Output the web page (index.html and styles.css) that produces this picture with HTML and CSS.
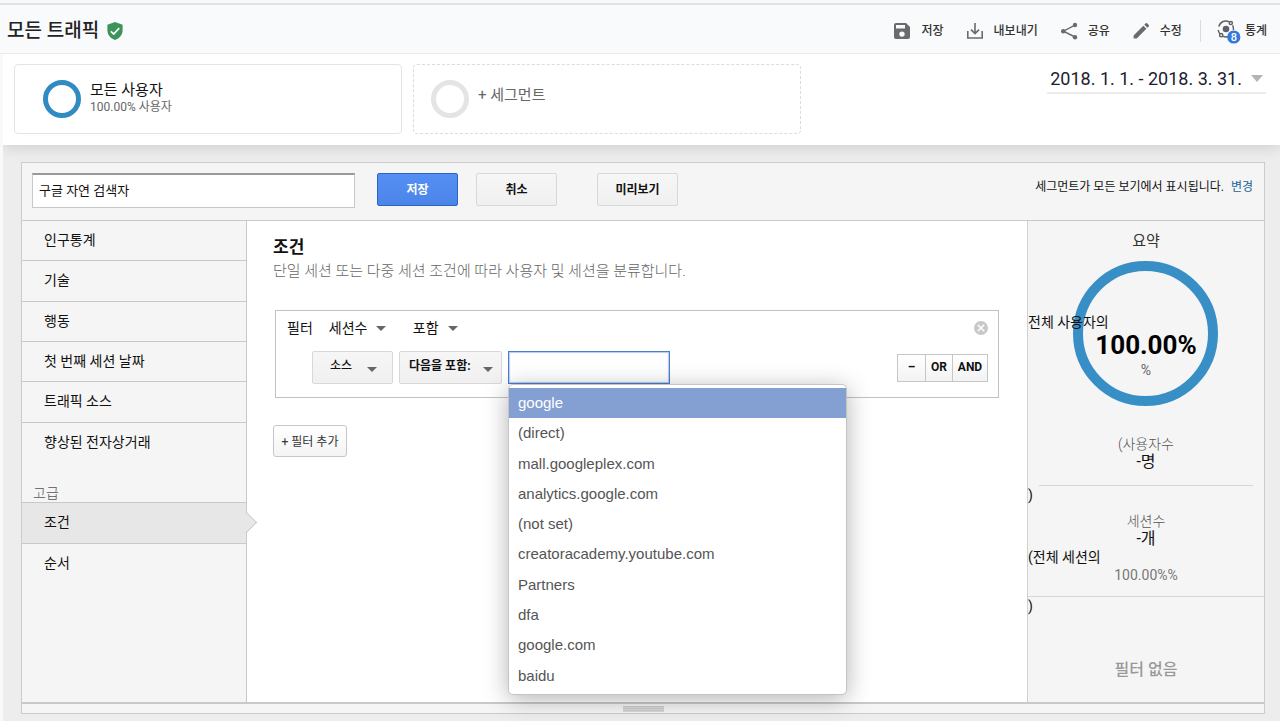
FILE: index.html
```
<!DOCTYPE html>
<html lang="ko">
<head>
    <meta charset="UTF-8">
    <meta name="viewport" content="width=device-width, initial-scale=1.0">
    <title>모든 트래픽</title>
    <link rel="stylesheet" href="styles.css">
</head>
<body>
    <header class="topbar">
        <h1>모든 트래픽</h1>
        <svg class="shield" viewBox="0 0 16 18" width="16" height="18">
            <path d="M8 0 L15.6 2.8 V8.6 C15.6 13 12.4 16.6 8 18 C3.6 16.6 0.4 13 0.4 8.6 V2.8 Z" fill="#3d9358"/>
            <path d="M3.8 9.4 L6.7 12 L12.2 6.2" fill="none" stroke="#fff" stroke-width="1.7"/>
        </svg>
        <div class="toolbar">
            <button type="button" class="tool">
                <svg viewBox="0 0 18 18" width="18" height="18" fill="#6b6b6b">
                    <path fill-rule="evenodd" d="M3 1 H13 L17 5 V15 A2 2 0 0 1 15 17 H3 A2 2 0 0 1 1 15 V3 A2 2 0 0 1 3 1 Z M3 3 V6.6 H12 V3 Z M9 9.4 A2.7 2.7 0 1 0 9 14.8 A2.7 2.7 0 1 0 9 9.4 Z"/>
                </svg>
                저장
            </button>
            <button type="button" class="tool">
                <svg viewBox="0 0 18 18" width="18" height="18" fill="none" stroke="#6b6b6b" stroke-width="1.6">
                    <path d="M1.8 9 V16 H16.2 V9 M9 1 V11.4 M5 7.6 L9 11.6 L13 7.6"/>
                </svg>
                내보내기
            </button>
            <button type="button" class="tool">
                <svg viewBox="0 0 18 18" width="18" height="18" fill="#6b6b6b">
                    <path d="M15 3.2 L3.4 9.2 L15 15" fill="none" stroke="#6b6b6b" stroke-width="1.4"/>
                    <circle cx="15" cy="3" r="2.2"/>
                    <circle cx="3.2" cy="9.2" r="2.2"/>
                    <circle cx="15" cy="15.2" r="2.2"/>
                </svg>
                공유
            </button>
            <button type="button" class="tool">
                <svg viewBox="0 0 18 18" width="18" height="18" fill="#6b6b6b">
                    <path d="M1.6 13.4 L11.3 3.7 L14.4 6.8 L4.7 16.5 H1.6 Z M12.3 2.7 L13.7 1.3 Q14.4 0.8 15.1 1.3 L16.8 3 Q17.3 3.7 16.8 4.4 L15.4 5.8 Z"/>
                </svg>
                수정
            </button>
            <button type="button" class="tool tool-insights">
                <svg viewBox="0 0 28 26" width="28" height="26" fill="none" stroke="#5f6164" stroke-width="1.5">
                    <circle cx="9" cy="11" r="3.3" fill="#5f6164" stroke="none"/>
                    <path d="M1.8 8.6 C3.4 3.2 8 2 12 3.6 M15.6 7.4 Q16.8 9.6 16.4 12 M1.2 12 Q1.6 14.4 3 16 M6 18.4 Q9 19.4 12 18.4"/>
                    <circle cx="13.8" cy="5" r="1.6"/>
                    <circle cx="4.2" cy="17.2" r="1.6"/>
                    <circle cx="16.8" cy="19" r="6.6" fill="#3577de" stroke="none"/>
                    <text x="16.8" y="23" class="badge-text">8</text>
                </svg>
                통계
            </button>
        </div>
    </header>

    <section class="segments">
        <button type="button" class="segment">
            <span class="donut"></span>
            <span class="segment-text">
                <span class="segment-name">모든 사용자</span>
                <span class="segment-share">100.00% 사용자</span>
            </span>
        </button>
        <button type="button" class="segment segment-add">
            <span class="donut donut-empty"></span>
            <span class="segment-text">+ 세그먼트</span>
        </button>
        <button type="button" class="date-range">2018. 1. 1. - 2018. 3. 31.</button>
    </section>

    <main class="workspace">
        <form class="builder">
            <div class="builder-head">
                <input type="text" class="segment-input" value="구글 자연 검색자" aria-label="세그먼트 이름">
                <button type="button" class="btn btn-primary">저장</button>
                <button type="button" class="btn">취소</button>
                <button type="button" class="btn btn-preview">미리보기</button>
                <p class="visibility">세그먼트가 모든 보기에서 표시됩니다. <a href="#">변경</a></p>
            </div>

            <div class="builder-body">
                <nav class="sidebar">
                    <ul class="nav-list">
                        <li><a href="#">인구통계</a></li>
                        <li><a href="#">기술</a></li>
                        <li><a href="#">행동</a></li>
                        <li><a href="#">첫 번째 세션 날짜</a></li>
                        <li><a href="#">트래픽 소스</a></li>
                        <li><a href="#">향상된 전자상거래</a></li>
                    </ul>
                    <h2>고급</h2>
                    <ul class="nav-list nav-advanced">
                        <li class="active"><a href="#">조건</a></li>
                        <li><a href="#">순서</a></li>
                    </ul>
                </nav>

                <section class="conditions">
                    <h2>조건</h2>
                    <p class="description">단일 세션 또는 다중 세션 조건에 따라 사용자 및 세션을 분류합니다.</p>

                    <div class="filter">
                        <div class="filter-row">
                            <span class="filter-label">필터</span>
                            <span class="select plain">
                                <select aria-label="필터 범위"><option>세션수</option></select>
                            </span>
                            <span class="select plain plain-mode">
                                <select aria-label="필터 방식"><option>포함</option></select>
                            </span>
                            <button type="button" class="remove" aria-label="필터 삭제">
                                <svg viewBox="0 0 14 14" width="14" height="14">
                                    <circle cx="7" cy="7" r="7" fill="#c8c8c8"/>
                                    <path d="M3.8 3.8 L10.2 10.2 M10.2 3.8 L3.8 10.2" stroke="#fff" stroke-width="1.5"/>
                                </svg>
                            </button>
                        </div>
                        <div class="filter-row rule">
                            <span class="select boxed">
                                <select aria-label="측정기준"><option>소스</option></select>
                            </span>
                            <span class="select boxed boxed-match">
                                <select aria-label="검색 유형"><option>다음을 포함:</option></select>
                            </span>
                            <div class="combo">
                                <input type="text" role="combobox" aria-expanded="true" aria-controls="sources" aria-label="값">
                                <ul id="sources" class="menu" role="listbox">
                                    <li role="option" aria-selected="true" class="selected">google</li>
                                    <li role="option">(direct)</li>
                                    <li role="option">mall.googleplex.com</li>
                                    <li role="option">analytics.google.com</li>
                                    <li role="option">(not set)</li>
                                    <li role="option">creatoracademy.youtube.com</li>
                                    <li role="option">Partners</li>
                                    <li role="option">dfa</li>
                                    <li role="option">google.com</li>
                                    <li role="option">baidu</li>
                                </ul>
                            </div>
                            <div class="logic">
                                <button type="button">–</button>
                                <button type="button">OR</button>
                                <button type="button">AND</button>
                            </div>
                        </div>
                    </div>

                    <button type="button" class="add-filter">+ 필터 추가</button>
                </section>

                <aside class="summary">
                    <h2>요약</h2>
                    <div class="gauge">
                        <p class="note">전체 사용자의</p>
                        <p class="percent">100.00%</p>
                        <p class="unit">%</p>
                    </div>
                    <div class="stat stat-users">
                        <p>(사용자수</p>
                        <p class="count">-명</p>
                    </div>
                    <p class="note">)</p>
                    <div class="stat stat-sessions">
                        <p>세션수</p>
                        <p class="count">-개</p>
                        <p class="note">(전체 세션의</p>
                        <p class="session-share">100.00%%</p>
                    </div>
                    <p class="note">)</p>
                    <p class="no-filter">필터 없음</p>
                </aside>
            </div>
            <div class="resizer"><span></span></div>
        </form>
    </main>
</body>
</html>
```
FILE: styles.css
```
*, *::before, *::after {
    box-sizing: border-box;
}
body {
    display: flex;
    flex-direction: column;
    min-height: 100vh;
    margin: 0;
    padding: 3px 0 0 3px;
    background-color: #f9f9f9;
    color: #111;
    font-family: Roboto, "Noto Sans CJK KR", sans-serif;
    font-size: 14px;
    line-height: 18px;
}
h1, h2, p, ul {
    margin: 0;
    padding: 0;
}
ul {
    list-style: none;
}
button, input, select {
    font-family: inherit;
    color: inherit;
}
button {
    padding: 0;
    border: none;
    background: none;
    cursor: pointer;
}
a {
    color: inherit;
    text-decoration: none;
}

/* top bar */
.topbar {
    display: flex;
    align-items: center;
    height: 51px;
    margin-left: -3px;
    padding: 3px 13px 0 7px;
    background-color: #f8fafb;
    border-top: 2px solid #e2e2e2;
    border-bottom: 1px solid #e9ebec;
}
.topbar h1 {
    font-size: 19px;
    font-weight: 500;
    line-height: 28px;
    color: #222;
}
.shield {
    margin-left: 8px;
}
.toolbar {
    display: flex;
    gap: 22px;
    margin-left: auto;
}
.tool {
    display: flex;
    align-items: center;
    gap: 10px;
    font-size: 12px;
    font-weight: 500;
    line-height: 22px;
    color: #333;
}
.tool-insights {
    gap: 0;
    margin-left: -4px;
    padding-left: 16px;
    border-left: 1px solid #d8dadb;
}
.tool-insights svg {
    margin: -2px 0;
}
.badge-text {
    fill: #fff;
    stroke: none;
    font-size: 11px;
    font-weight: 500;
    text-anchor: middle;
}

/* segments */
.segments {
    position: relative;
    display: flex;
    align-items: flex-start;
    gap: 11px;
    height: 91px;
    padding: 10px 14px 0 11px;
    background-color: #fff;
    box-shadow: 0 2px 14px rgba(0, 0, 0, 0.14);
    clip-path: inset(0 0 -20px 0);
}
.segment {
    display: flex;
    gap: 9px;
    flex: 0 1 388px;
    height: 70px;
    padding: 15px 28px;
    border: 1px solid #e4e4e4;
    border-radius: 4px;
    text-align: left;
}
.segment-add {
    padding-left: 17px;
    border: 1px dashed #dcdcdc;
}
.donut {
    width: 38px;
    height: 38px;
    border: 5px solid #2f8bc1;
    border-radius: 50%;
}
.donut-empty {
    border-color: #e4e4e4;
}
.segment-text {
    padding-top: 1px;
    font-size: 15px;
    line-height: 18px;
    color: #111;
}
.segment-name, .segment-share {
    display: block;
}
.segment-share {
    font-size: 12px;
    line-height: 16px;
    color: #666;
}
.segment-add .segment-text {
    padding-top: 6px;
    color: #666;
}
.date-range {
    display: flex;
    align-items: center;
    gap: 9px;
    height: 30px;
    margin-left: auto;
    padding: 0 3px;
    border-bottom: 2px solid #ececec;
    font-size: 18px;
    color: #1b2030;
}
.date-range::after {
    content: "";
    border: 6px solid transparent;
    border-top: 7px solid #b4b4b4;
    border-bottom: none;
}

/* builder */
.workspace {
    display: flex;
    flex: 1;
    padding: 17px 15px 7px 18px;
    background-color: #ededed;
}
.builder {
    display: flex;
    flex: 1;
    flex-direction: column;
    border: 1px solid #cbcbcb;
    background-color: #f5f5f5;
    z-index: 1;
}
.builder-head {
    display: flex;
    align-items: flex-start;
    height: 58px;
    padding: 10px 11px 0 10px;
    border-bottom: 1px solid #c9c9c9;
}
.segment-input {
    flex: 0 1 323px;
    height: 35px;
    margin-right: 22px;
    padding: 0 6px 4px;
    border: 1px solid #c8c8c8;
    border-top: 2px solid #999;
    background-color: #fff;
    font-size: 13px;
}
.btn {
    width: 81px;
    height: 33px;
    margin-right: 18px;
    padding-bottom: 3px;
    border: 1px solid #d8d8d8;
    border-radius: 2px;
    background: linear-gradient(#f6f6f6, #f0f0f0);
    font-size: 12px;
    font-weight: 700;
}
.btn-primary {
    border-color: #2966c4;
    background: linear-gradient(#548ff5, #4c85e8);
    color: #fff;
}
.btn-preview {
    margin-left: 22px;
}
.visibility {
    margin: 5px 0 0 auto;
    font-size: 12px;
}
.visibility a {
    margin-left: 4px;
    color: #17639c;
}
.builder-body {
    display: flex;
    flex: 1;
}

/* sidebar */
.sidebar {
    width: 225px;
    border-right: 1px solid #c9c9c9;
}
.nav-list {
    display: grid;
    grid-auto-rows: 1fr;
    height: 242px;
}
.nav-list li {
    position: relative;
    border-bottom: 1px solid #c9c9c9;
}
.nav-list li:last-child {
    border-bottom: none;
}
.nav-list a {
    display: block;
    padding: 10px 22px;
}
.sidebar h2 {
    padding: 21px 11px 0;
    font-size: 14px;
    font-weight: 300;
    color: #555;
}
.nav-advanced {
    height: 82px;
    border-top: 1px solid #c9c9c9;
}
.nav-list .active {
    background-color: #e7e7e7;
}
.active::after {
    content: "";
    position: absolute;
    top: 12px;
    right: -8px;
    width: 15px;
    height: 15px;
    border: 1px solid #c4c4c4;
    border-left: none;
    border-bottom: none;
    background: linear-gradient(45deg, transparent 50%, #e7e7e7 50%);
    transform: rotate(45deg);
}

/* conditions */
.conditions {
    flex: 1;
    padding: 16px 28px 0 26px;
    background-color: #fff;
}
.conditions h2 {
    font-size: 17px;
    font-weight: 700;
    line-height: 20px;
}
.description {
    padding-top: 5px;
    font-size: 15px;
    font-weight: 300;
    color: #666;
}
.filter {
    height: 88px;
    margin: 30px 0 27px 2px;
    padding: 8px 10px 0 11px;
    border: 1px solid #c2c2c2;
}
.filter-row {
    display: flex;
    align-items: center;
}
.filter-label {
    margin-right: 16px;
}
.select {
    position: relative;
    display: inline-flex;
}
.select::after {
    content: "";
    position: absolute;
    top: 50%;
    right: 0;
    margin-top: -2px;
    border: 5px solid transparent;
    border-top-color: #666;
    border-bottom: none;
    pointer-events: none;
}
.select select {
    width: 100%;
    margin: 0;
    padding: 0;
    border: none;
    border-radius: 0;
    appearance: none;
    background: none;
    font-size: 14px;
    line-height: 18px;
}
.plain {
    width: 57px;
}
.plain-mode {
    width: 45px;
    margin-left: 27px;
}
.remove {
    height: 14px;
    margin-left: auto;
}
.rule {
    padding: 14px 0 0 25px;
}
.boxed {
    width: 81px;
    margin-right: 6px;
}
.boxed select {
    height: 33px;
    padding: 0 17px 4px;
    border: 1px solid #d8d8d8;
    border-radius: 2px;
    background: linear-gradient(#f6f6f6, #f0f0f0);
    font-size: 12px;
    font-weight: 500;
}
.boxed::after {
    right: 16px;
    margin-top: -1px;
}
.boxed-match {
    width: 103px;
}
.boxed-match select {
    padding-right: 9px;
    padding-left: 9px;
    font-weight: 700;
}
.boxed-match::after {
    right: 9px;
}
.combo {
    position: relative;
}
.combo input {
    display: block;
    width: 162px;
    height: 33px;
    padding: 0 8px;
    border: 1px solid #4a7ecb;
    background-color: #fff;
    box-shadow: inset 0 0 1px 1px rgba(74, 126, 203, 0.4);
    outline: none;
}
.menu {
    position: absolute;
    top: 33px;
    left: 0;
    z-index: 2;
    display: grid;
    grid-auto-rows: 1fr;
    width: 339px;
    height: 311px;
    padding: 3px 0;
    border: 1px solid #c4c4c4;
    border-radius: 5px;
    background-color: #fff;
    box-shadow: 0 4px 24px rgba(0, 0, 0, 0.3);
    font-family: "Liberation Sans", Arial, sans-serif;
    font-size: 15px;
    line-height: 30px;
    color: #555;
}
.menu li {
    padding: 0 9px;
}
.menu .selected {
    background-color: #849fd2;
    color: #fff;
}
.logic {
    display: flex;
    height: 28px;
    margin-left: auto;
    border: 1px solid #c6c6c6;
    background: linear-gradient(#fff, #f2f2f2);
}
.logic button {
    width: 27px;
    padding-bottom: 2px;
    font-size: 12px;
    font-weight: 700;
}
.logic button + button {
    border-left: 1px solid #c6c6c6;
}
.logic button:last-child {
    width: 35px;
}
.add-filter {
    display: block;
    width: 74px;
    height: 32px;
    padding-bottom: 2px;
    border: 1px solid #c6c6c6;
    border-radius: 3px;
    background: linear-gradient(#fff, #f4f4f4);
    font-size: 12px;
    color: #333;
}

/* summary */
.summary {
    width: 237px;
    border-left: 1px solid #d0d0d0;
    text-align: center;
}
.summary h2 {
    padding: 10px 0;
    font-size: 15px;
    font-weight: 400;
    line-height: 20px;
    color: #333;
}
.gauge {
    position: relative;
    height: 145px;
    padding-top: 52px;
}
.gauge::before {
    content: "";
    position: absolute;
    top: 0;
    left: 50%;
    width: 145px;
    height: 145px;
    margin-left: -73px;
    border: 10px solid #388fc5;
    border-radius: 50%;
}
.gauge p {
    position: relative;
}
.note {
    font-size: 14px;
    text-align: left;
}
.gauge .percent {
    font-size: 26px;
    font-weight: 700;
    line-height: 28px;
    color: #000;
}
.unit {
    line-height: 22px;
    color: #666;
}
.stat {
    font-weight: 300;
    color: #555;
}
.stat-users {
    margin: 0 11px;
    padding: 29px 0 14px;
    border-bottom: 1px solid #d6d6d6;
}
.stat .count {
    font-size: 16px;
    font-weight: 400;
    color: #111;
}
.stat .note {
    font-weight: 400;
    color: #111;
}
.stat-sessions {
    padding: 8px 0 12px;
    border-bottom: 1px solid #d6d6d6;
}
.stat .session-share {
    font-weight: 400;
    color: #777;
}
.no-filter {
    padding-top: 46px;
    font-size: 16px;
    font-weight: 500;
    color: #999;
}
.resizer {
    display: flex;
    align-items: center;
    justify-content: center;
    height: 11px;
    border-top: 2px solid #c9c9c9;
}
.resizer span {
    width: 41px;
    height: 6px;
    background: repeating-linear-gradient(#cdcdcd 0 1px, #dadada 1px 2px);
}
```
